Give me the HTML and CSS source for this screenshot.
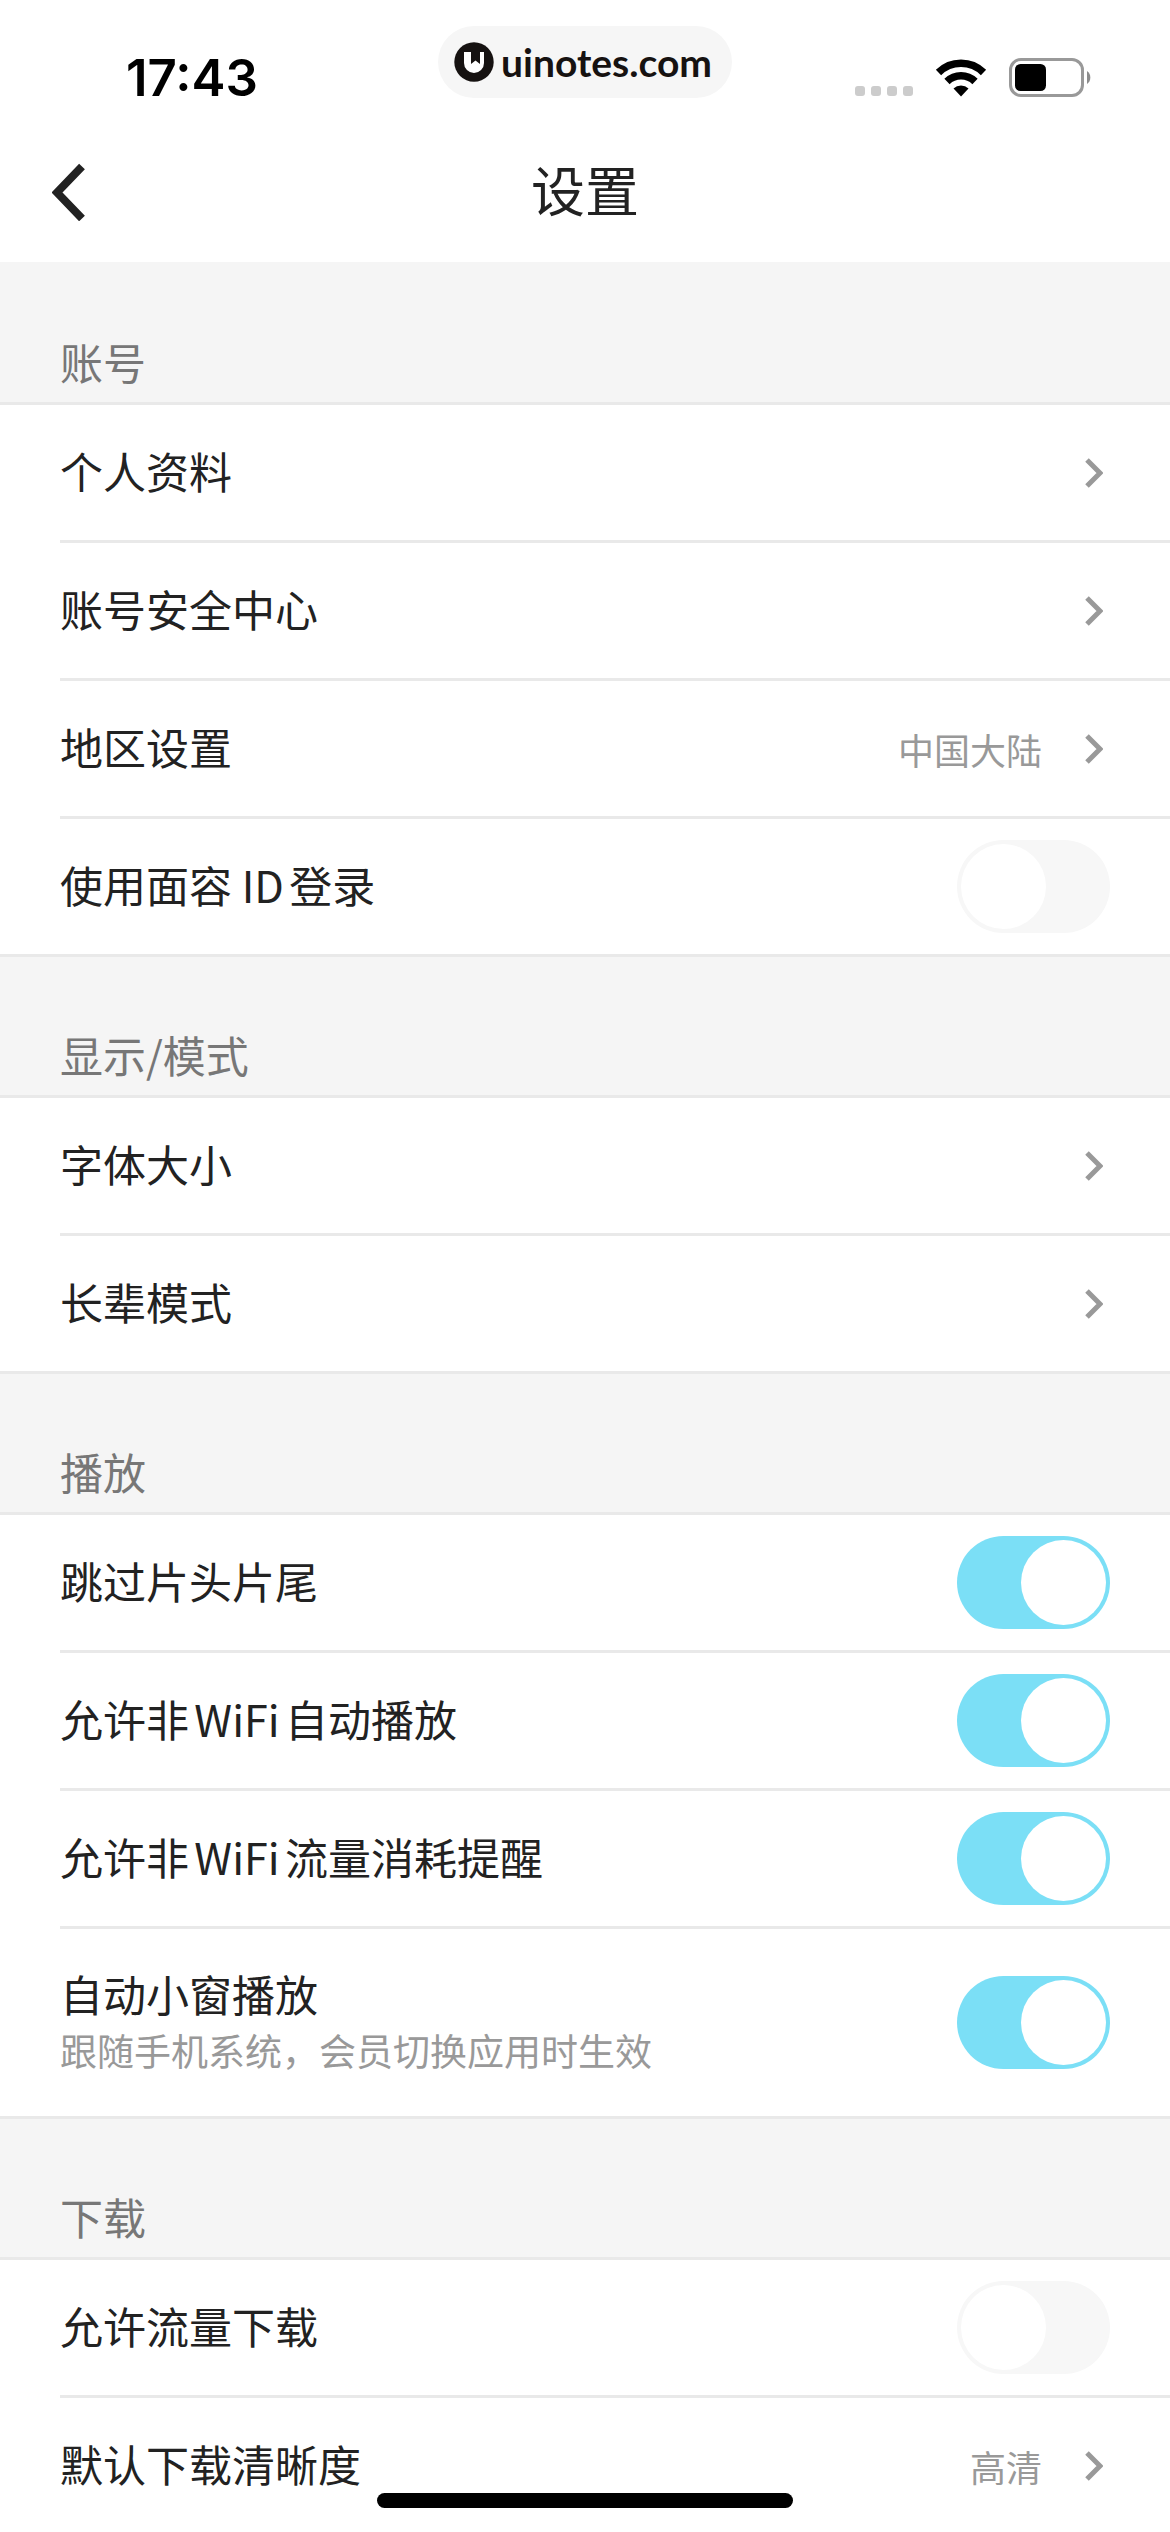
FILE: index.html
```html
<!DOCTYPE html>
<html lang="zh-CN">
<head>
	<meta charset="UTF-8">
	<meta name="viewport" content="width=device-width">
	<title>设置</title>
	<link rel="stylesheet" href="styles.css">
</head>
<body>
	<div class="page">
		<div class="status">
			<div class="time">17:43</div>
			<div class="brand">
				<svg width="40" height="40" viewBox="0 0 40 40">
					<circle cx="20" cy="20" r="19.7" fill="#161211"/>
					<path d="M10 10h7v12l4.500-3.500 4.500 3.500V10h4v11a10 10 0 0 1-20 0z" fill="#fff"/>
				</svg>
				<span>uinotes.com</span>
			</div>
			<div class="state">
				<svg width="58" height="40" viewBox="0 0 58 40" fill="#ccc">
					<rect x="0" y="28" width="10" height="10" rx="3"/>
					<rect x="16" y="28" width="10" height="10" rx="3"/>
					<rect x="32" y="28" width="10" height="10" rx="3"/>
					<rect x="48" y="28" width="10" height="10" rx="3"/>
				</svg>
				<svg width="52" height="40" viewBox="0 0 52 40">
					<path d="M3.500 14.500a32 32 0 0 1 45 0" fill="none" stroke="#000" stroke-width="7.500"/>
					<path d="M12 23.500a20 20 0 0 1 28 0" fill="none" stroke="#000" stroke-width="7.500"/>
					<path d="M26 38.500l-7.500-8a11 11 0 0 1 15 0z"/>
				</svg>
				<svg width="82" height="40" viewBox="0 0 82 40">
					<rect x="1.500" y="1.500" width="72" height="36" rx="10.500" fill="none" stroke="#999" stroke-width="3"/>
					<rect x="6" y="6" width="31" height="27" rx="5.500"/>
					<path d="M78 13a8 8 0 0 1 0 13z" fill="#8c8c8c"/>
				</svg>
			</div>
		</div>
		<header class="nav">
			<a class="back" href="#" aria-label="返回">
				<svg width="34" height="58" viewBox="0 0 34 58">
					<path d="M30 3.500L5 29.500l25 26" fill="none" stroke="#222" stroke-width="8"/>
				</svg>
			</a>
			<h1>设置</h1>
		</header>
		<main class="list">
			<h2>账号</h2>
			<ul>
				<li><a class="row" href="#">
					<span class="name">个人资料</span>
					<svg class="arrow" viewBox="0 0 18 30"><path d="M2 2l13 13L2 28"/></svg>
				</a></li>
				<li><a class="row" href="#">
					<span class="name">账号安全中心</span>
					<svg class="arrow" viewBox="0 0 18 30"><path d="M2 2l13 13L2 28"/></svg>
				</a></li>
				<li><a class="row" href="#">
					<span class="name">地区设置</span>
					<span class="value">中国大陆</span>
					<svg class="arrow" viewBox="0 0 18 30"><path d="M2 2l13 13L2 28"/></svg>
				</a></li>
				<li><label class="row">
					<span class="name">使用面容 ID登录</span>
					<input class="switch" type="checkbox">
				</label></li>
			</ul>

			<h2>显示/模式</h2>
			<ul>
				<li><a class="row" href="#">
					<span class="name">字体大小</span>
					<svg class="arrow" viewBox="0 0 18 30"><path d="M2 2l13 13L2 28"/></svg>
				</a></li>
				<li><a class="row" href="#">
					<span class="name">长辈模式</span>
					<svg class="arrow" viewBox="0 0 18 30"><path d="M2 2l13 13L2 28"/></svg>
				</a></li>
			</ul>

			<h2>播放</h2>
			<ul>
				<li><label class="row">
					<span class="name">跳过片头片尾</span>
					<input class="switch" type="checkbox" checked>
				</label></li>
				<li><label class="row">
					<span class="name">允许非WiFi自动播放</span>
					<input class="switch" type="checkbox" checked>
				</label></li>
				<li><label class="row">
					<span class="name">允许非WiFi流量消耗提醒</span>
					<input class="switch" type="checkbox" checked>
				</label></li>
				<li><label class="row tall">
					<span class="name">自动小窗播放<small>跟随手机系统，会员切换应用时生效</small></span>
					<input class="switch" type="checkbox" checked>
				</label></li>
			</ul>

			<h2>下载</h2>
			<ul>
				<li><label class="row">
					<span class="name">允许流量下载</span>
					<input class="switch" type="checkbox">
				</label></li>
				<li><a class="row" href="#">
					<span class="name">默认下载清晰度</span>
					<span class="value">高清</span>
					<svg class="arrow" viewBox="0 0 18 30"><path d="M2 2l13 13L2 28"/></svg>
				</a></li>
			</ul>
		</main>
		<div class="home"></div>
	</div>
</body>
</html>
```

FILE: styles.css
```css
*{
	margin: 0;
	padding: 0;
	box-sizing: border-box;
}
body{
	font-family: "Noto Sans CJK SC", sans-serif;
	color: #222;
	background: #fff;
	text-autospace: normal;
}
ul{
	list-style: none;
}
a{
	color: inherit;
	text-decoration: none;
}
svg{
	display: block;
	flex: none;
}
.page{
	height: 100vh;
	display: flex;
	flex-direction: column;
}

/* 状态栏 */
.status{
	display: grid;
	grid-template-columns: 1fr auto 1fr;
	align-items: start;
	padding-top: 26px;
	height: 122px;
	flex: none;
}
.time{
	padding-left: 126px;
	font: 600 51px/104px Inter, sans-serif;
	color: #000;
}
.brand{
	display: flex;
	align-items: center;
	gap: 7px;
	height: 72px;
	padding: 0 20px 0 16px;
	border-radius: 36px;
	background: #f6f6f6;
	color: #161211;
	font: 700 39px/72px Lato, sans-serif;
}
.state{
	display: flex;
	align-items: center;
	justify-content: flex-end;
	gap: 22px;
	height: 104px;
	padding-right: 79px;
}

/* 标题栏 */
.nav{
	display: grid;
	grid-template-columns: 1fr auto 1fr;
	align-items: center;
	height: 140px;
	flex: none;
}
.back{
	justify-self: start;
	padding: 16px 52px;
}
.nav h1{
	padding-bottom: 6px;
	font-size: 54px;
	line-height: 80px;
	font-weight: 400;
}

/* 设置列表 */
.list{
	flex: 1;
	min-height: 0;
	overflow-y: auto;
	scrollbar-width: none;
	padding-top: 2px;
	background: #f5f5f5;
}
.list h2{
	height: 138px;
	padding: 67px 60px 0;
	font-size: 43px;
	line-height: 60px;
	font-weight: 400;
	color: #777;
}
.list ul{
	background: #fff;
	border-top: 3px solid #e9e9e9;
	border-bottom: 3px solid #e9e9e9;
}
.list ul:last-child{
	border-bottom: 0;
}
.list li{
	padding-left: 60px;
}
.list li + li .row{
	border-top: 3px solid #e9e9e9;
	min-height: 138px;
}
.row{
	display: flex;
	align-items: center;
	min-height: 135px;
	padding-right: 60px;
}
.list li + li .tall{
	min-height: 190px;
}
.name{
	flex: 1;
	padding-bottom: 6px;
	font-size: 43px;
	line-height: 60px;
}
.name small{
	display: block;
	font-size: 37px;
	line-height: 54px;
	color: #999;
}
.value{
	font-size: 36px;
	line-height: 54px;
	color: #999;
	margin-right: 43px;
}
.arrow{
	width: 18px;
	height: 30px;
	margin-right: 7px;
	fill: none;
	stroke: #999;
	stroke-width: 5;
}
.switch{
	appearance: none;
	display: flex;
	width: 153px;
	height: 93px;
	padding: 4px;
	border-radius: 47px;
	background: #f7f7f7;
	cursor: pointer;
}
.switch::before{
	content: "";
	width: 85px;
	height: 85px;
	border-radius: 50%;
	background: #fff;
}
.switch:checked{
	justify-content: flex-end;
	background: #7bdff6;
}
.home{
	position: fixed;
	bottom: 24px;
	left: 50%;
	width: 416px;
	height: 15px;
	margin-left: -208px;
	border-radius: 8px;
	background: #000;
}
```
